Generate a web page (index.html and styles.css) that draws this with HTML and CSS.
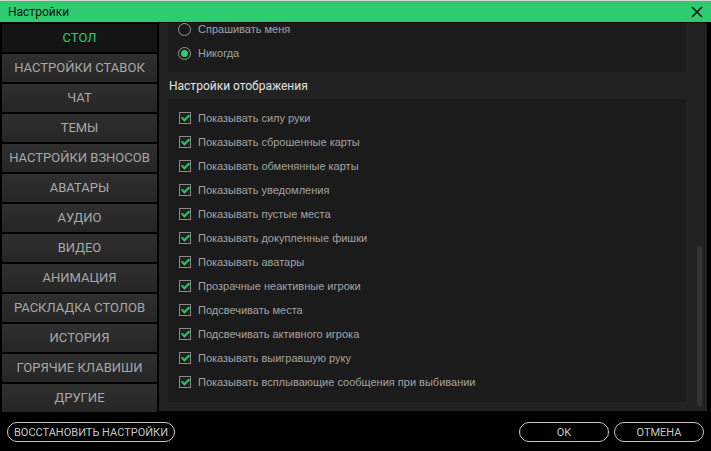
FILE: index.html
```html
<!DOCTYPE html>
<html lang="ru">
<head>
<meta charset="utf-8">
<title>Настройки</title>
<link rel="stylesheet" href="styles.css">
</head>
<body>
<div class="window">
  <div class="titlebar">
    <span class="title">Настройки</span>
    <svg class="close" width="12" height="12" viewBox="0 0 12 12"><path d="M1 1L11 11M11 1L1 11" stroke="#151515" stroke-width="1.6" fill="none"/></svg>
  </div>
  <div class="main">
    <nav class="sidebar">
      <div class="nav-item active">СТОЛ</div>
      <div class="nav-item">НАСТРОЙКИ СТАВОК</div>
      <div class="nav-item">ЧАТ</div>
      <div class="nav-item">ТЕМЫ</div>
      <div class="nav-item">НАСТРОЙКИ ВЗНОСОВ</div>
      <div class="nav-item">АВАТАРЫ</div>
      <div class="nav-item">АУДИО</div>
      <div class="nav-item">ВИДЕО</div>
      <div class="nav-item">АНИМАЦИЯ</div>
      <div class="nav-item">РАСКЛАДКА СТОЛОВ</div>
      <div class="nav-item">ИСТОРИЯ</div>
      <div class="nav-item">ГОРЯЧИЕ КЛАВИШИ</div>
      <div class="nav-item">ДРУГИЕ</div>
    </nav>
    <div class="panel">
      <div class="section radios">
        <div class="row"><span class="radio"></span><span>Спрашивать меня</span></div>
        <div class="row"><span class="radio on"></span><span>Никогда</span></div>
      </div>
      <div class="section-title">Настройки отображения</div>
      <div class="section checks">
        <div class="row"><span class="check"></span><span>Показывать силу руки</span></div>
        <div class="row"><span class="check"></span><span>Показывать сброшенные карты</span></div>
        <div class="row"><span class="check"></span><span>Показывать обменянные карты</span></div>
        <div class="row"><span class="check"></span><span>Показывать уведомления</span></div>
        <div class="row"><span class="check"></span><span>Показывать пустые места</span></div>
        <div class="row"><span class="check"></span><span>Показывать докупленные фишки</span></div>
        <div class="row"><span class="check"></span><span>Показывать аватары</span></div>
        <div class="row"><span class="check"></span><span>Прозрачные неактивные игроки</span></div>
        <div class="row"><span class="check"></span><span>Подсвечивать места</span></div>
        <div class="row"><span class="check"></span><span>Подсвечивать активного игрока</span></div>
        <div class="row"><span class="check"></span><span>Показывать выигравшую руку</span></div>
        <div class="row"><span class="check"></span><span>Показывать всплывающие сообщения при выбивании</span></div>
      </div>
      <div class="scroll-thumb"></div>
    </div>
  </div>
  <div class="bottombar">
    <button class="pill restore">ВОССТАНОВИТЬ НАСТРОЙКИ</button>
    <div class="spacer"></div>
    <button class="pill ok">OK</button>
    <button class="pill cancel">ОТМЕНА</button>
  </div>
</div>
</body>
</html>
```

FILE: styles.css
```css
* { box-sizing: border-box; }
html, body { margin: 0; padding: 0; background: #000; }
body { font-family: Roboto, "Liberation Sans", sans-serif; }

.window {
  width: 711px;
  height: 451px;
  display: flex;
  flex-direction: column;
  background: #000;
  overflow: hidden;
}

.titlebar {
  height: 22px;
  flex: none;
  background: #2fcb71;
  border-top: 1px solid #cfd3d1;
  display: flex;
  align-items: center;
  justify-content: space-between;
  padding: 0 8px 0 8px;
}
.title { font-size: 12px; color: #111; }
.close { display: block; }

.main {
  height: 389px;
  flex: none;
  display: flex;
  padding: 1px 4px 0 2px;
}

.sidebar {
  width: 155px;
  flex: none;
  display: flex;
  flex-direction: column;
  gap: 2px;
  padding-top: 1px;
}
.nav-item {
  height: 28px;
  flex: none;
  display: flex;
  align-items: center;
  justify-content: center;
  padding-bottom: 2px;
  font-size: 13px;
  color: #a8a8a8;
  background: linear-gradient(#2f2f2f, #262626);
  white-space: nowrap;
}
.nav-item.active {
  background: #141414;
  color: #2fcb71;
}

.panel {
  margin-left: 2px;
  width: 548px;
  height: 388px;
  background: #222;
  position: relative;
  overflow: hidden;
  display: flex;
  flex-direction: column;
  justify-content: flex-end;
  padding: 0 21px 9px 9px;
}

.section {
  background: #1b1b1b;
  padding: 0 0 8px 0;
  flex: none;
}
.section.radios { padding-top: 4px; padding-bottom: 7px; }
.section.checks { padding-top: 7px; }

.row {
  height: 24px;
  display: flex;
  align-items: center;
  font-size: 11px;
  color: #a3a3a3;
  font-family: "Liberation Sans", Arial, sans-serif;
}

.radio {
  width: 13px;
  height: 13px;
  border: 1px solid #9a9a9a;
  border-radius: 50%;
  margin: 0 7px 0 10px;
  display: flex;
  align-items: center;
  justify-content: center;
}
.radio.on::after {
  content: "";
  width: 7px;
  height: 7px;
  border-radius: 50%;
  background: #2fcb71;
}

.check {
  width: 12px;
  height: 12px;
  border: 1px solid #8a8a8a;
  background: #1e1e1e;
  margin: 0 7px 0 11px;
  position: relative;
}
.check::after {
  content: "";
  position: absolute;
  left: 3px;
  top: 0px;
  width: 3px;
  height: 6px;
  border: solid #2fcb71;
  border-width: 0 2px 2px 0;
  transform: rotate(45deg);
}

.section-title {
  height: 27px;
  flex: none;
  display: flex;
  align-items: center;
  padding-left: 1px;
  font-size: 12px;
  color: #e2e2e2;
}

.scroll-thumb {
  position: absolute;
  left: 538px;
  top: 223px;
  width: 5px;
  height: 161px;
  border-radius: 3px;
  background: #333;
}

.bottombar {
  height: 40px;
  flex: none;
  display: flex;
  align-items: center;
  padding: 2px 7px 0 7px;
  gap: 5px;
}
.spacer { flex: 1; }
.pill {
  height: 20px;
  border: 1px solid #c8c8c8;
  border-radius: 10px;
  background: transparent;
  color: #c8c8c8;
  font-family: Roboto, "Liberation Sans", sans-serif;
  font-size: 11px;
  padding: 0;
  white-space: nowrap;
  display: flex;
  align-items: center;
  justify-content: center;
}
.restore { width: 168px; }
.ok { width: 90px; }
.cancel { width: 90px; }
```
